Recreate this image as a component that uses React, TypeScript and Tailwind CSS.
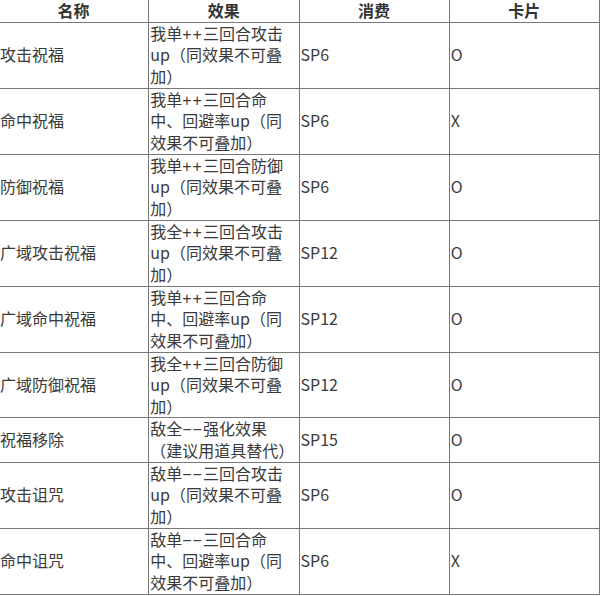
type Row = {
  name: string;
  effect: string[];
  cost: string;
  card: string;
};

const rows: Row[] = [
  { name: "攻击祝福", effect: ["我单++三回合攻击", "up（同效果不可叠", "加）"], cost: "SP6", card: "O" },
  { name: "命中祝福", effect: ["我单++三回合命", "中、回避率up（同", "效果不可叠加）"], cost: "SP6", card: "X" },
  { name: "防御祝福", effect: ["我单++三回合防御", "up（同效果不可叠", "加）"], cost: "SP6", card: "O" },
  { name: "广域攻击祝福", effect: ["我全++三回合攻击", "up（同效果不可叠", "加）"], cost: "SP12", card: "O" },
  { name: "广域命中祝福", effect: ["我单++三回合命", "中、回避率up（同", "效果不可叠加）"], cost: "SP12", card: "O" },
  { name: "广域防御祝福", effect: ["我全++三回合防御", "up（同效果不可叠", "加）"], cost: "SP12", card: "O" },
  { name: "祝福移除", effect: ["敌全−−强化效果", "（建议用道具替代）"], cost: "SP15", card: "O" },
  { name: "攻击诅咒", effect: ["敌单−−三回合攻击", "up（同效果不可叠", "加）"], cost: "SP6", card: "O" },
  { name: "命中诅咒", effect: ["敌单−−三回合命", "中、回避率up（同", "效果不可叠加）"], cost: "SP6", card: "X" },
];

const cell = "border border-[#777] px-[1px] py-0 align-middle text-left";

// the ++ / −− marks are drawn in an Arial-width face so they sit wider apart
function EffectLine({ text }: { text: string }) {
  const parts = text.split(/([+−]+)/);
  return (
    <div className="h-[21.67px] whitespace-nowrap">
      {parts.map((p, i) =>
        /^[+−]+$/.test(p) ? (
          <span
            key={i}
            className="tracking-[1px] leading-none"
            style={{ fontFamily: '"Liberation Sans", sans-serif' }}
          >
            {p}
          </span>
        ) : (
          <span key={i}>{p}</span>
        ),
      )}
    </div>
  );
}

export default function App() {
  return (
    <div
      className="min-h-[596px] overflow-hidden bg-white text-[16px] leading-[21.67px] text-[#3a3a3a]"
      style={{ fontFamily: '"Noto Sans CJK SC", "Noto Sans", sans-serif' }}
    >
      <table className="-mt-[1px] -ml-[2px] w-[602px] table-fixed border-collapse">
        <colgroup>
          <col className="w-[150px]" />
          <col className="w-[150px]" />
          <col className="w-[150px]" />
          <col className="w-[150px]" />
        </colgroup>
        <thead>
          <tr>
            {["名称", "效果", "消费", "卡片"].map((h) => (
              <th key={h} className="border border-[#777] py-0 text-center font-bold text-[#333]">
                {h}
              </th>
            ))}
          </tr>
        </thead>
        <tbody>
          {rows.map((r) => (
            <tr key={r.name}>
              <td className={cell}>{r.name}</td>
              <td className={cell}>
                {r.effect.map((line, i) => (
                  <EffectLine key={i} text={line} />
                ))}
              </td>
              <td className={cell}>{r.cost}</td>
              <td className={cell}>{r.card}</td>
            </tr>
          ))}
        </tbody>
      </table>
    </div>
  );
}
